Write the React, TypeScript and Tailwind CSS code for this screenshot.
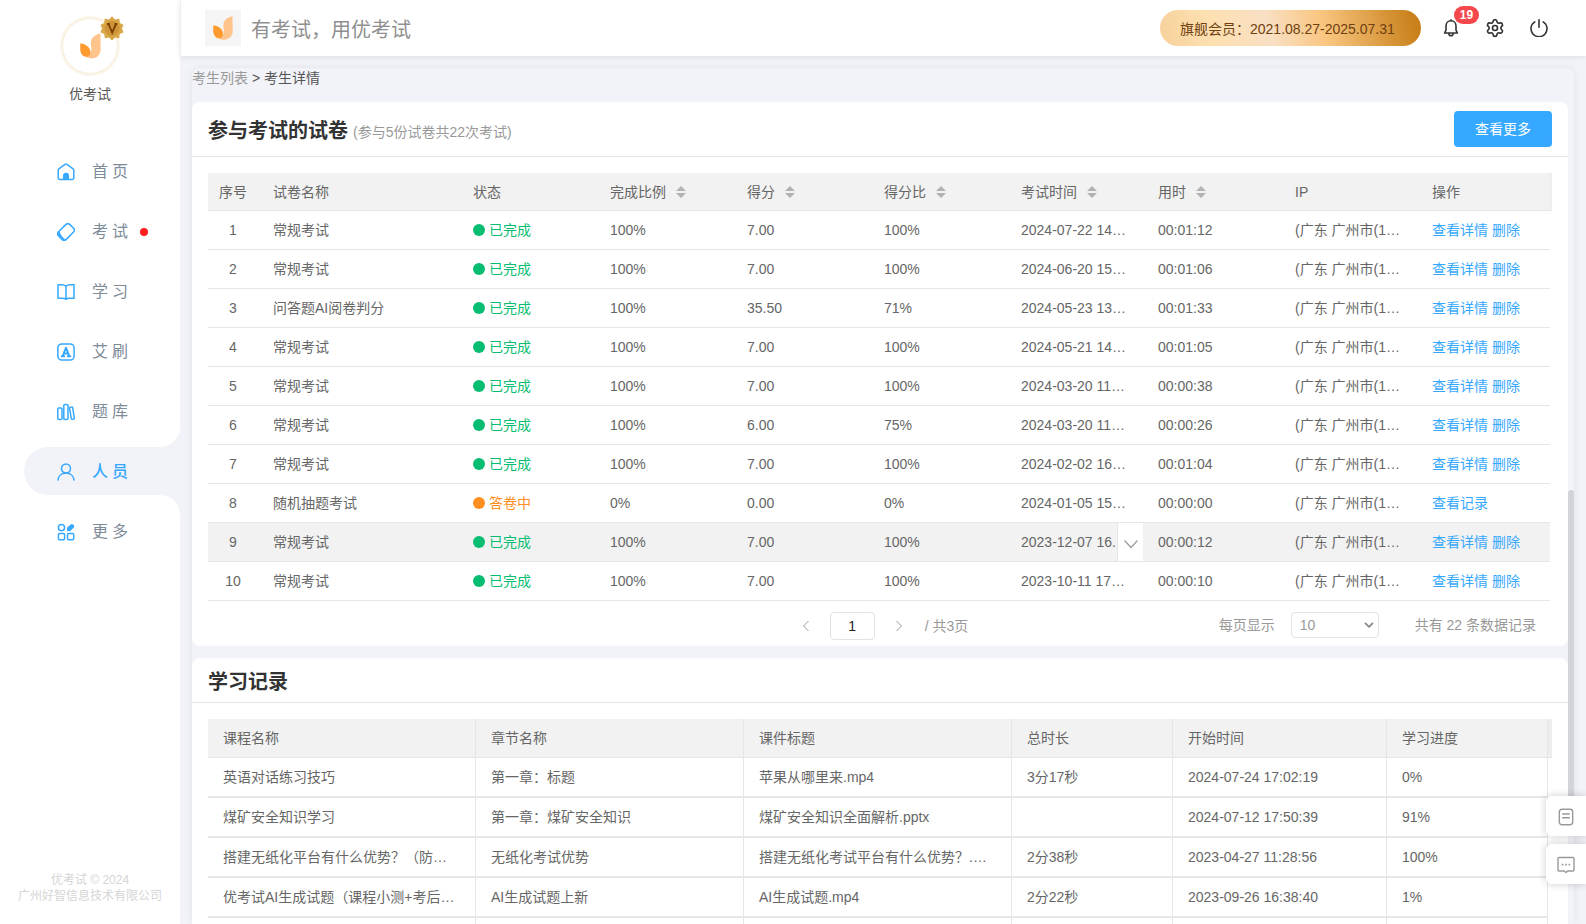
import { ReactNode } from 'react';
import { Settings } from 'lucide-react';

const TrophyMark = ({ className }: { className?: string }) => (
    <svg viewBox="0 0 20 24" className={className} aria-hidden="true">
        <path d="M19.500.2C14 1.200 10.300 4.500 10.300 9.500c0 1.600.5 3.500.5 6 0 3-1.800 5.800-5.300 6.700 1.500 1 3.500 1.600 5.500 1.600 5 0 8.700-3.600 8.700-8.500z" fill="#ffc48c" />
        <path d="M.4 9.300C5.500 10 10 13.200 10 18c0 2.500-1.500 4.300-3.800 4.300C2.500 22.300.2 19 .2 14.500c0-2 0-3.500.2-5.200z" fill="#ff9a2e" />
    </svg>
);

const VipBadge = () => (
    <svg viewBox="0 0 24 24" className="absolute -top-0.5 -right-1.5 w-6 h-6" aria-hidden="true">
        <path
            d="M12 .3l3 3.200 4.300-.8.6 4.300 3.800 2-1.900 3.500 1.900 3.800-3.900 1.800-.7 4.200-4.200-.8-2.900 3.200-2.900-3.200-4.200.8-.7-4.200-3.900-1.800L2.200 12.500.3 9l3.800-2 .6-4.300 4.300.8z"
            fill="#d8a748"
        />
        <circle cx="12" cy="12.200" r="7.500" fill="#cf9538" />
        <path d="M7 8h3M14.500 8h2.800M8.500 8l3.700 8.700L16 8" fill="none" stroke="#7a4300" strokeWidth="1.900" />
    </svg>
);

const NavIcon = ({ children }: { children: ReactNode }) => (
    <svg viewBox="0 0 18 18" className="w-[18px] h-[18px] shrink-0" fill="none" stroke="#37a8ff" strokeWidth="1.500" strokeLinejoin="round" strokeLinecap="round" aria-hidden="true">
        {children}
    </svg>
);

const navItems = [
    {
        label: "首页",
        icon: (
            <>
                <path d="M1.200 7.300c0-.6.200-1 .7-1.400L8 1.400c.6-.5 1.400-.5 2 0l6.100 4.500c.5.4.7.8.7 1.400v7.800c0 .8-.6 1.400-1.400 1.400H2.600c-.8 0-1.400-.6-1.400-1.400z" />
                <path d="M6 16.500v-3.700a3 3 0 0 1 6 0v3.700z" fill="#37a8ff" stroke="none" />
            </>
        ),
    },
    {
        label: "考试",
        dot: true,
        icon: (
            <g transform="rotate(45 9 9)">
                <rect x="3.600" y="1" width="10.800" height="16" rx="3" />
                <path d="M4 12.800c2 1.800 6.500 2.600 10 1.700-.4 1.400-1.400 2.200-2.800 2.200H6.800A2.800 2.800 0 0 1 4 13.900z" fill="#37a8ff" stroke="none" />
            </g>
        ),
    },
    {
        label: "学习",
        icon: <path d="M9 3.200C8 2 6.800 1.700 5 1.700H1v13.600h4.500c1.700 0 2.700.3 3.500 1.200.8-.9 1.800-1.200 3.500-1.200H17V1.700h-4c-1.800 0-3 .3-4 1.500zm0 0v13.300" />,
    },
    {
        label: "艾刷",
        icon: (
            <>
                <rect x=".9" y=".9" width="16.200" height="16.200" rx="3.800" />
                <path d="M5.700 13.200 9 4.700l3.300 8.500M6.800 10.500h4.400M4.600 13.300h2.600M10.800 13.300h2.600" strokeWidth="1.900" />
            </>
        ),
    },
    {
        label: "题库",
        icon: (
            <>
                <rect x=".8" y="5" width="4.200" height="11.500" rx="1" />
                <rect x="6.800" y="1.500" width="4.200" height="15" rx="1" />
                <path d="M12.600 5.300c-.1-.5.2-.9.700-1l1.400-.2c.5-.1.900.2 1 .7l1.600 10.300c.1.500-.2.900-.7 1l-1.300.2c-.5.1-.9-.2-1-.7z" />
            </>
        ),
    },
    {
        label: "人员",
        active: true,
        icon: (
            <>
                <circle cx="9" cy="5.500" r="4.500" />
                <path d="M1 17c.4-4 3.500-7 8-7s7.600 3 8 7" />
            </>
        ),
    },
    {
        label: "更多",
        icon: (
            <>
                <circle cx="4.500" cy="4.600" r="3.100" />
                <rect x="1.400" y="10.500" width="6.200" height="6.200" rx="1.200" />
                <rect x="10.500" y="10.500" width="6.200" height="6.200" rx="1.200" />
                <path d="m12.300 5.700 2.600-2.300" strokeWidth="4.600" />
                <path d="m9.800 8.400.8-3.200 2.400 2.400z" fill="#37a8ff" stroke="none" />
            </>
        ),
    },
];

const Sidebar = () => (
    <aside className="w-[180px] shrink-0 flex flex-col bg-white">
        <div className="flex flex-col items-center pt-4">
            <div className="relative w-[60px] h-[60px] rounded-full border-2 border-[#fbf5ea] bg-white">
                <div className="w-full h-full rounded-full border border-[#f8ead2] flex items-center justify-center">
                    <TrophyMark className="w-[21px] h-[26px]" />
                </div>
                <VipBadge />
            </div>
            <div className="mt-2 text-sm leading-5 text-[#555]">优考试</div>
        </div>

        <nav className="mt-[43px] pl-6 flex flex-col gap-3">
            {navItems.map((item) => (
                <a
                    key={item.label}
                    href="#"
                    className={item.active
                        ? "relative flex items-center h-12 pt-0.5 pl-[33px] rounded-l-full bg-[#f2f3f8] text-[#37a8ff] font-medium"
                        : "relative flex items-center h-12 pt-0.5 pl-[33px] text-[#7d8b99]"}
                >
                    {/* Concave corners that join the active tab to the page */}
                    {item.active && (
                        <>
                            <span className="absolute right-0 bottom-full w-5 h-5 bg-[#f2f3f8]"><span className="block w-5 h-5 bg-white rounded-br-[20px]" /></span>
                            <span className="absolute right-0 top-full w-5 h-5 bg-[#f2f3f8]"><span className="block w-5 h-5 bg-white rounded-tr-[20px]" /></span>
                        </>
                    )}
                    <NavIcon>{item.icon}</NavIcon>
                    <span className="ml-[17px] text-base leading-6 tracking-[4px]">{item.label}</span>
                    {item.dot && <span className="ml-2 w-2 h-2 rounded-full bg-[#ff1e1e]" />}
                </a>
            ))}
        </nav>

        <div className="mt-auto pb-5 text-center text-xs leading-4 text-[#d5d5d5]">
            <p>优考试 © 2024</p>
            <p>广州好智信息技术有限公司</p>
        </div>
    </aside>
);

const Header = () => (
    <header className="relative z-10 flex items-center h-14 pl-6 pr-[38px] bg-white border-l border-[#ececf4] shadow-[0_1px_6px_rgba(0,0,0,0.09)]">
        <div className="w-9 h-9 flex items-center justify-center bg-[#f5f5f5]">
            <TrophyMark className="w-5 h-6" />
        </div>
        <h1 className="ml-2.5 pt-[3px] text-xl leading-8 text-[#8f8f8f]">有考试，用优考试</h1>

        <div className="ml-auto h-9 w-[261px] pl-5 pt-0.5 flex items-center rounded-full text-sm leading-5 text-[#70400f] whitespace-nowrap bg-[linear-gradient(75deg,#f6d19b_0%,#fde0b0_20%,#f9dfc4_42%,#f9c680_62%,#c9811c_96%)]">
            旗舰会员：2021.08.27-2025.07.31
        </div>

        <button type="button" aria-label="消息" className="relative ml-[21px] w-[18px] h-[18px] text-[#333]">
            <svg viewBox="0 0 18 18" className="w-[18px] h-[18px]" fill="none" stroke="currentColor" strokeWidth="1.600" strokeLinejoin="round">
                <path d="M9 1.700c-3 0-5 2.200-5 5.200v4.200L2.600 14h12.800L14 11.100V6.900c0-3-2-5.200-5-5.200zM9 .3v1.400M6.700 14.300c.2 1.500 1 2.400 2.300 2.400s2.100-.9 2.300-2.400" />
            </svg>
            <span className="absolute left-3 bottom-[13px] w-[25px] h-[18px] rounded-full bg-[#f5484d] text-xs leading-[18px] font-bold text-white text-center">19</span>
        </button>
        <button type="button" aria-label="设置" className="ml-[25px] w-5 h-5 text-[#333]">
            <Settings className="w-5 h-5" strokeWidth={2} />
        </button>
        <button type="button" aria-label="退出" className="ml-[25px] w-[18px] h-[18px] text-[#333]">
            <svg viewBox="0 0 18 18" className="w-[18px] h-[18px]" fill="none" stroke="currentColor" strokeWidth="1.600" strokeLinecap="round">
                <path d="M9 .8v7.500M4.800 2.900a8 8 0 1 0 8.400 0" />
            </svg>
        </button>
    </header>
);

const SortArrows = () => (
    <svg viewBox="0 0 10 12" className="w-2.5 h-3" fill="#b2b2b2" aria-hidden="true">
        <path d="M5 0l5 5H0zM5 12L0 7h10z" />
    </svg>
);

const examColumns = [
    { title: "序号", width: "w-[50px]" },
    { title: "试卷名称", width: "w-[200px]" },
    { title: "状态", width: "w-[137px]" },
    { title: "完成比例", width: "w-[137px]", sort: true },
    { title: "得分", width: "w-[137px]", sort: true },
    { title: "得分比", width: "w-[137px]", sort: true },
    { title: "考试时间", width: "w-[137px]", sort: true },
    { title: "用时", width: "w-[137px]", sort: true },
    { title: "IP", width: "w-[137px]" },
    { title: "操作", width: "w-[133px]" },
];

const exams = [
    { name: "常规考试", done: true, ratio: "100%", score: "7.00", rate: "100%", time: "2024-07-22 14…", used: "00:01:12" },
    { name: "常规考试", done: true, ratio: "100%", score: "7.00", rate: "100%", time: "2024-06-20 15…", used: "00:01:06" },
    { name: "问答题AI阅卷判分", done: true, ratio: "100%", score: "35.50", rate: "71%", time: "2024-05-23 13…", used: "00:01:33" },
    { name: "常规考试", done: true, ratio: "100%", score: "7.00", rate: "100%", time: "2024-05-21 14…", used: "00:01:05" },
    { name: "常规考试", done: true, ratio: "100%", score: "7.00", rate: "100%", time: "2024-03-20 11…", used: "00:00:38" },
    { name: "常规考试", done: true, ratio: "100%", score: "6.00", rate: "75%", time: "2024-03-20 11…", used: "00:00:26" },
    { name: "常规考试", done: true, ratio: "100%", score: "7.00", rate: "100%", time: "2024-02-02 16…", used: "00:01:04" },
    { name: "随机抽题考试", done: false, ratio: "0%", score: "0.00", rate: "0%", time: "2024-01-05 15…", used: "00:00:00" },
    { name: "常规考试", done: true, ratio: "100%", score: "7.00", rate: "100%", time: "2023-12-07 16.", used: "00:00:12", hover: true },
    { name: "常规考试", done: true, ratio: "100%", score: "7.00", rate: "100%", time: "2023-10-11 17…", used: "00:00:10" },
];

const examCell = "px-[15px] h-[39px] border-b border-[#e6e6e6] whitespace-nowrap";

const ExamTable = () => (
    <table className="w-full table-fixed border-separate border-spacing-0 text-sm leading-5 text-[#666]">
        <thead>
            <tr className="bg-[#f2f2f2] text-left">
                {examColumns.map((col, index) => (
                    <th
                        key={col.title}
                        className={`${col.width} ${index === 0 ? "text-center" : "px-[15px]"} h-[38px] border-b border-[#e6e6e6] font-normal whitespace-nowrap`}
                    >
                        {col.sort ? (
                            <button type="button" className="flex items-center gap-2.5">
                                {col.title}
                                <SortArrows />
                            </button>
                        ) : col.title}
                    </th>
                ))}
                <th aria-hidden="true" className="w-[2px] p-0 bg-[#eee] border-b border-[#e6e6e6]" />
            </tr>
        </thead>
        <tbody>
            {exams.map((exam, index) => (
                <tr key={index}>
                    {[
                        index + 1,
                        exam.name,
                        <span className={exam.done ? "flex items-center gap-1 text-[#07bd71]" : "flex items-center gap-1 text-[#ff8f1f]"}>
                            <span className="w-3 h-3 rounded-full bg-current" />
                            {exam.done ? "已完成" : "答卷中"}
                        </span>,
                        exam.ratio,
                        exam.score,
                        exam.rate,
                        <>
                            {exam.time}
                            {exam.hover && (
                                <button type="button" aria-label="展开" className="absolute top-0 right-0 w-[26px] h-[38px] flex items-center justify-center bg-white border-l border-[#e6e6e6]">
                                    <svg viewBox="0 0 16 16" className="mt-1 w-4 h-4" fill="none" stroke="#999" strokeWidth="1.200"><path d="m1.500 4.500 6.500 7 6.500-7" /></svg>
                                </button>
                            )}
                        </>,
                        exam.used,
                        "(广东 广州市(1…",
                        exam.done ? (
                            <span className="flex gap-1 text-[#37a8ff]"><a href="#">查看详情</a><a href="#">删除</a></span>
                        ) : (
                            <a href="#" className="text-[#37a8ff]">查看记录</a>
                        ),
                    ].map((cell, i) => (
                        <td key={i} className={`${examCell} ${i === 0 ? "text-center" : ""} ${i === 6 ? "relative" : ""} ${exam.hover ? "bg-[#f2f2f2]" : ""}`}>
                            {cell}
                        </td>
                    ))}
                    <td />
                </tr>
            ))}
        </tbody>
    </table>
);

const Pagination = () => (
    <div className="grid grid-cols-[1fr_auto_1fr] items-center pt-[11px] pb-[6px] px-4 text-sm leading-5 text-[#999]">
        <div />
        <div className="flex items-center pl-1.5">
            <button type="button" aria-label="上一页" className="w-4 h-7 flex items-center justify-center">
                <svg viewBox="0 0 8 12" className="w-2 h-3" fill="none" stroke="#999"><path d="M6.500 1 1.500 6l5 5" /></svg>
            </button>
            <input type="text" aria-label="页码" defaultValue="1" className="mx-4 w-[45px] h-7 border border-[#e2e2e2] rounded text-center text-[#222] bg-white" />
            <button type="button" aria-label="下一页" className="w-4 h-7 flex items-center justify-center">
                <svg viewBox="0 0 8 12" className="w-2 h-3" fill="none" stroke="#999"><path d="m1.500 1 5 5-5 5" /></svg>
            </button>
            <span className="ml-[18px]">/ 共3页</span>
        </div>
        <div className="flex items-center justify-end pr-4 pb-0.5">
            <label htmlFor="page-size">每页显示</label>
            <div className="relative ml-4">
                <select id="page-size" defaultValue="10" className="appearance-none w-[88px] h-[26px] pl-2 border border-[#e2e2e2] rounded bg-white text-[#999]">
                    <option>10</option>
                    <option>20</option>
                    <option>50</option>
                </select>
                <svg viewBox="0 0 10 6" className="absolute right-[5px] top-2.5 w-2.5 h-1.5 pointer-events-none" fill="none" stroke="#888" strokeWidth="1.800"><path d="m1 .8 4 4 4-4" /></svg>
            </div>
            <span className="ml-9">共有 22 条数据记录</span>
        </div>
    </div>
);

const studyColumns = [
    { title: "课程名称", width: "w-[268px]" },
    { title: "章节名称", width: "w-[268px]" },
    { title: "课件标题", width: "w-[268px]" },
    { title: "总时长", width: "w-[161px]" },
    { title: "开始时间", width: "w-[214px]" },
    { title: "学习进度", width: "w-[161px]" },
];

const studies = [
    ["英语对话练习技巧", "第一章：标题", "苹果从哪里来.mp4", "3分17秒", "2024-07-24 17:02:19", "0%"],
    ["煤矿安全知识学习", "第一章：煤矿安全知识", "煤矿安全知识全面解析.pptx", "", "2024-07-12 17:50:39", "91%"],
    ["搭建无纸化平台有什么优势？（防…", "无纸化考试优势", "搭建无纸化考试平台有什么优势？.…", "2分38秒", "2023-04-27 11:28:56", "100%"],
    ["优考试AI生成试题（课程小测+考后…", "AI生成试题上新", "AI生成试题.mp4", "2分22秒", "2023-09-26 16:38:40", "1%"],
    ["", "", "", "", "", ""],
];

const StudyTable = () => (
    <table className="w-full table-fixed border-separate border-spacing-0 text-sm leading-5 text-[#666]">
        <thead>
            <tr className="bg-[#f2f2f2] text-left">
                {studyColumns.map((col) => (
                    <th key={col.title} className={`${col.width} h-[39px] px-[15px] border-b border-r border-[#e6e6e6] font-normal`}>{col.title}</th>
                ))}
                <th aria-hidden="true" className="w-1 p-0 bg-[#eee] border-b border-[#e6e6e6]" />
            </tr>
        </thead>
        <tbody>
            {studies.map((row, index) => (
                <tr key={index}>
                    {row.map((cell, i) => (
                        <td key={i} className="h-10 px-[15px] border-b-2 border-r border-[#e6e6e6] whitespace-nowrap">{cell}</td>
                    ))}
                    <td />
                </tr>
            ))}
        </tbody>
    </table>
);

const FloatingTools = () => (
    <div className="fixed right-0 bottom-10 z-20 flex flex-col gap-2">
        <button type="button" aria-label="文档" className="w-10 h-10 pt-0.5 flex items-center justify-center rounded-l-md bg-white shadow-[0_0_8px_rgba(0,0,0,0.2)]">
            <svg viewBox="0 0 18 18" className="w-[18px] h-[18px]" fill="none" stroke="#999" strokeWidth="1.400" strokeLinecap="round">
                <rect x="2.300" y="1.300" width="13.400" height="15.400" rx="2.600" />
                <path d="M5.700 6h6.600M5.700 9.700h6.600" />
            </svg>
        </button>
        <button type="button" aria-label="客服" className="w-10 h-10 pt-0.5 flex items-center justify-center rounded-l-md bg-white shadow-[0_0_8px_rgba(0,0,0,0.2)]">
            <svg viewBox="0 0 18 18" className="w-[18px] h-[18px]" fill="none" stroke="#999" strokeWidth="1.400" strokeLinejoin="round">
                <path d="M2 1.500h14c.6 0 1 .4 1 1V14c0 .6-.4 1-1 1h-5.300L9 16.500 7.300 15H2c-.6 0-1-.4-1-1V2.500c0-.6.4-1 1-1z" />
                <path d="M4.800 8.600h1.600M8.200 8.600h1.600M11.600 8.600h1.600" strokeWidth="1.600" />
            </svg>
        </button>
    </div>
);

const App = () => {
    return (
        <div className="flex h-screen overflow-hidden bg-[#f2f3f8] font-['Liberation_Sans','Noto_Sans_CJK_SC',sans-serif]">
            <Sidebar />
            <div className="flex-1 min-w-0 flex flex-col">
                <Header />
                <main className="relative flex-1 min-h-0 mt-3 mx-3 rounded-t-lg shadow-[0_0_8px_rgba(0,0,0,0.07)]">
                    <div className="h-full pr-1.5 overflow-y-auto [scrollbar-width:none]">
                        <div className="h-[34px] text-sm leading-5 text-[#555]">
                            <a href="#" className="text-[#999]">考生列表</a> &gt; <span>考生详情</span>
                        </div>

                        <section className="bg-white rounded-lg">
                            <div className="flex items-center h-[55px] px-4 border-b border-[#e6e6e6]">
                                <h2 className="pt-[3px] text-xl leading-8 font-bold text-[#333]">参与考试的试卷</h2>
                                <span className="ml-[5px] mt-1.5 text-sm leading-5 text-[#999]">(参与5份试卷共22次考试)</span>
                                <button type="button" className="ml-auto w-[98px] h-9 rounded bg-[#37a8ff] text-sm leading-5 text-white">查看更多</button>
                            </div>
                            <div className="px-4 pt-4">
                                <ExamTable />
                            </div>
                            <Pagination />
                        </section>

                        <section className="mt-3 bg-white rounded-lg">
                            <div className="flex items-center h-[45px] px-4 border-b border-[#e6e6e6]">
                                <h2 className="pt-[3px] text-xl leading-8 font-bold text-[#333]">学习记录</h2>
                            </div>
                            <div className="px-4 pt-4 pb-4">
                                <StudyTable />
                            </div>
                        </section>
                    </div>
                    {/* Scroll thumb */}
                    <div className="absolute right-0 bottom-[100px] w-1.5 h-[334px] rounded-full bg-[#d2d4da]" />
                </main>
            </div>
            <FloatingTools />
        </div>
    );
};

export default App;
